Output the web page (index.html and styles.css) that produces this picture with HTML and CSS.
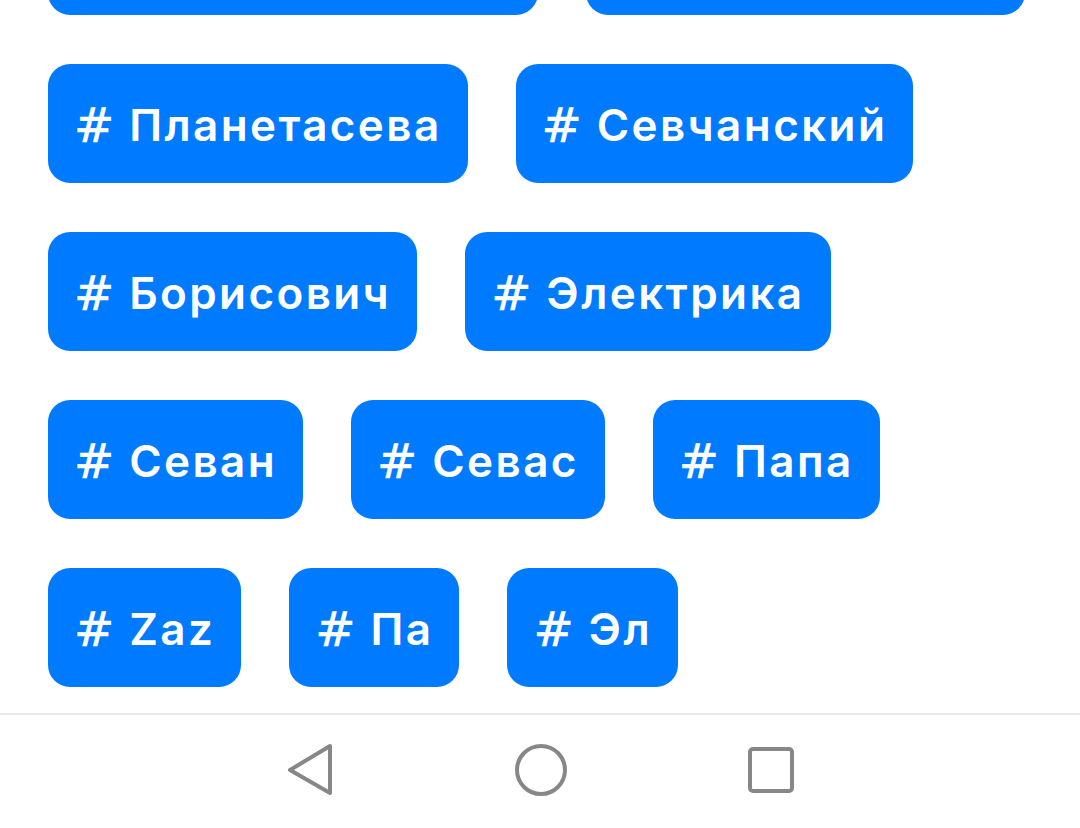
FILE: index.html
```html
<!DOCTYPE html>
<html lang="ru">
<head>
<meta charset="utf-8">
<title>Теги</title>
<link rel="stylesheet" href="styles.css">
</head>
<body>
<div class="screen">
  <main class="viewport">
    <div class="tags">
      <span class="tag tag-wide"></span>
      <span class="tag tag-mid"></span>
      <span class="tag"><span class="hash">#</span><span class="word">Планетасева</span></span>
      <span class="tag"><span class="hash">#</span><span class="word">Севчанский</span></span>
      <span class="tag"><span class="hash">#</span><span class="word">Борисович</span></span>
      <span class="tag"><span class="hash">#</span><span class="word">Электрика</span></span>
      <span class="tag"><span class="hash">#</span><span class="word">Севан</span></span>
      <span class="tag"><span class="hash">#</span><span class="word">Севас</span></span>
      <span class="tag"><span class="hash">#</span><span class="word">Папа</span></span>
      <span class="tag"><span class="hash">#</span><span class="word">Zaz</span></span>
      <span class="tag"><span class="hash">#</span><span class="word">Па</span></span>
      <span class="tag"><span class="hash">#</span><span class="word">Эл</span></span>
    </div>
  </main>
  <nav class="navbar">
    <svg class="nav-back" width="48" height="56" viewBox="0 0 48 56" aria-label="Назад">
      <path d="M4 28 L44 4 L44 51 Z" fill="none" stroke="#878787" stroke-width="4" stroke-linejoin="round"/>
    </svg>
    <svg class="nav-home" width="52" height="52" viewBox="0 0 52 52" aria-label="Домой">
      <circle cx="26" cy="26" r="24" fill="none" stroke="#878787" stroke-width="4"/>
    </svg>
    <svg class="nav-recent" width="46" height="46" viewBox="0 0 46 46" aria-label="Недавние">
      <rect x="2" y="2" width="42" height="42" rx="3" fill="none" stroke="#878787" stroke-width="4"/>
    </svg>
  </nav>
</div>
</body>
</html>
```
FILE: styles.css
```css
* { box-sizing: border-box; }
html, body {
  margin: 0;
  padding: 0;
  background: #ffffff;
}
body {
  font-family: Inter, "Noto Sans", "Liberation Sans", sans-serif;
}
.screen {
  width: 1080px;
  height: 828px;
  display: flex;
  flex-direction: column;
  overflow: hidden;
}
.viewport {
  height: 713px;
  overflow: hidden;
  flex: none;
}
.tags {
  margin-top: -104px;
  padding: 0 48px;
  display: flex;
  flex-wrap: wrap;
  column-gap: 48px;
  row-gap: 49px;
}
.tag {
  height: 119px;
  display: flex;
  align-items: center;
  gap: 15px;
  padding: 3px 26px 0 26px;
  background: #007aff;
  color: #ffffff;
  border-radius: 22px;
  white-space: nowrap;
}
.hash {
  font-family: "DejaVu Sans", sans-serif;
  font-size: 48px;
  font-weight: 400;
  -webkit-text-stroke: 0.6px #ffffff;
  line-height: 1;
}
.word {
  font-family: Inter, "Noto Sans", sans-serif;
  font-size: 44px;
  font-weight: 600;
  letter-spacing: 2.4px;
  line-height: 1;
}
.tag-wide { width: 490px; }
.tag-mid { width: 439px; }
.navbar {
  flex: 1;
  border-top: 2px solid #e8e8ea;
  display: flex;
  align-items: center;
  justify-content: center;
  gap: 181px;
  padding-bottom: 4px;
}
.navbar svg { display: block; }
```
